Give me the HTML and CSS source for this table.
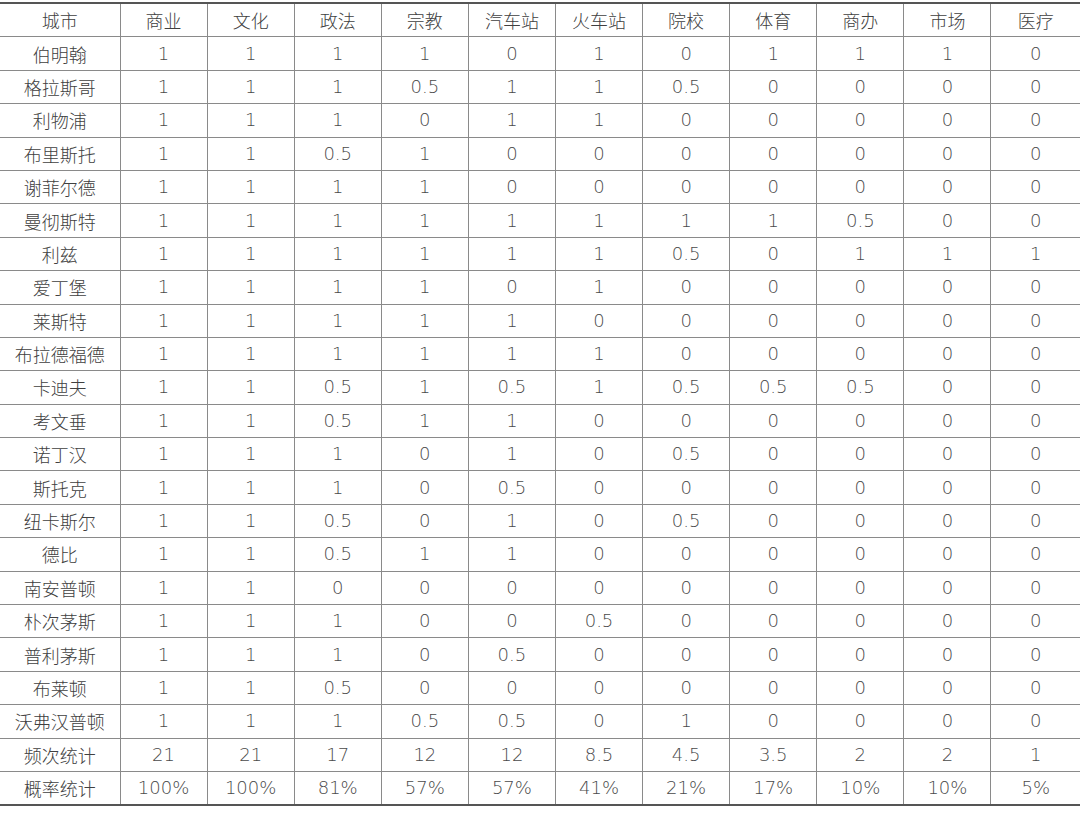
FILE: index.html
```html
<!DOCTYPE html>
<html lang="zh">
<head>
<meta charset="utf-8">
<title>城市统计</title>
<link rel="stylesheet" href="styles.css">
</head>
<body>
<div class="wrap">
<table class="grid">
<thead>
<tr><th>城市</th><th>商业</th><th>文化</th><th>政法</th><th>宗教</th><th>汽车站</th><th>火车站</th><th>院校</th><th>体育</th><th>商办</th><th>市场</th><th>医疗</th></tr>
</thead>
<tbody>
<tr><td>伯明翰</td><td>1</td><td>1</td><td>1</td><td>1</td><td>0</td><td>1</td><td>0</td><td>1</td><td>1</td><td>1</td><td>0</td></tr>
<tr><td>格拉斯哥</td><td>1</td><td>1</td><td>1</td><td>0.5</td><td>1</td><td>1</td><td>0.5</td><td>0</td><td>0</td><td>0</td><td>0</td></tr>
<tr><td>利物浦</td><td>1</td><td>1</td><td>1</td><td>0</td><td>1</td><td>1</td><td>0</td><td>0</td><td>0</td><td>0</td><td>0</td></tr>
<tr><td>布里斯托</td><td>1</td><td>1</td><td>0.5</td><td>1</td><td>0</td><td>0</td><td>0</td><td>0</td><td>0</td><td>0</td><td>0</td></tr>
<tr><td>谢菲尔德</td><td>1</td><td>1</td><td>1</td><td>1</td><td>0</td><td>0</td><td>0</td><td>0</td><td>0</td><td>0</td><td>0</td></tr>
<tr><td>曼彻斯特</td><td>1</td><td>1</td><td>1</td><td>1</td><td>1</td><td>1</td><td>1</td><td>1</td><td>0.5</td><td>0</td><td>0</td></tr>
<tr><td>利兹</td><td>1</td><td>1</td><td>1</td><td>1</td><td>1</td><td>1</td><td>0.5</td><td>0</td><td>1</td><td>1</td><td>1</td></tr>
<tr><td>爱丁堡</td><td>1</td><td>1</td><td>1</td><td>1</td><td>0</td><td>1</td><td>0</td><td>0</td><td>0</td><td>0</td><td>0</td></tr>
<tr><td>莱斯特</td><td>1</td><td>1</td><td>1</td><td>1</td><td>1</td><td>0</td><td>0</td><td>0</td><td>0</td><td>0</td><td>0</td></tr>
<tr><td>布拉德福德</td><td>1</td><td>1</td><td>1</td><td>1</td><td>1</td><td>1</td><td>0</td><td>0</td><td>0</td><td>0</td><td>0</td></tr>
<tr><td>卡迪夫</td><td>1</td><td>1</td><td>0.5</td><td>1</td><td>0.5</td><td>1</td><td>0.5</td><td>0.5</td><td>0.5</td><td>0</td><td>0</td></tr>
<tr><td>考文垂</td><td>1</td><td>1</td><td>0.5</td><td>1</td><td>1</td><td>0</td><td>0</td><td>0</td><td>0</td><td>0</td><td>0</td></tr>
<tr><td>诺丁汉</td><td>1</td><td>1</td><td>1</td><td>0</td><td>1</td><td>0</td><td>0.5</td><td>0</td><td>0</td><td>0</td><td>0</td></tr>
<tr><td>斯托克</td><td>1</td><td>1</td><td>1</td><td>0</td><td>0.5</td><td>0</td><td>0</td><td>0</td><td>0</td><td>0</td><td>0</td></tr>
<tr><td>纽卡斯尔</td><td>1</td><td>1</td><td>0.5</td><td>0</td><td>1</td><td>0</td><td>0.5</td><td>0</td><td>0</td><td>0</td><td>0</td></tr>
<tr><td>德比</td><td>1</td><td>1</td><td>0.5</td><td>1</td><td>1</td><td>0</td><td>0</td><td>0</td><td>0</td><td>0</td><td>0</td></tr>
<tr><td>南安普顿</td><td>1</td><td>1</td><td>0</td><td>0</td><td>0</td><td>0</td><td>0</td><td>0</td><td>0</td><td>0</td><td>0</td></tr>
<tr><td>朴次茅斯</td><td>1</td><td>1</td><td>1</td><td>0</td><td>0</td><td>0.5</td><td>0</td><td>0</td><td>0</td><td>0</td><td>0</td></tr>
<tr><td>普利茅斯</td><td>1</td><td>1</td><td>1</td><td>0</td><td>0.5</td><td>0</td><td>0</td><td>0</td><td>0</td><td>0</td><td>0</td></tr>
<tr><td>布莱顿</td><td>1</td><td>1</td><td>0.5</td><td>0</td><td>0</td><td>0</td><td>0</td><td>0</td><td>0</td><td>0</td><td>0</td></tr>
<tr><td>沃弗汉普顿</td><td>1</td><td>1</td><td>1</td><td>0.5</td><td>0.5</td><td>0</td><td>1</td><td>0</td><td>0</td><td>0</td><td>0</td></tr>
<tr><td>频次统计</td><td>21</td><td>21</td><td>17</td><td>12</td><td>12</td><td>8.5</td><td>4.5</td><td>3.5</td><td>2</td><td>2</td><td>1</td></tr>
<tr><td>概率统计</td><td>100%</td><td>100%</td><td>81%</td><td>57%</td><td>57%</td><td>41%</td><td>21%</td><td>17%</td><td>10%</td><td>10%</td><td>5%</td></tr>
</tbody>
</table>
</div>
</body>
</html>
```
FILE: styles.css
```css
html, body {
  margin: 0;
  padding: 0;
  background: #ffffff;
}
.wrap {
  padding-top: 2px;
  width: 1080px;
  overflow: hidden;
}
.grid {
  border-collapse: collapse;
  table-layout: fixed;
  width: 1080px;
  font-family: "Noto Sans CJK SC", "Noto Sans", sans-serif;
  font-weight: 300;
  font-size: 18px;
  color: #404040;
  border-top: 2px solid #555555;
  border-bottom: 2px solid #555555;
}
.grid th, .grid td {
  font-weight: 300;
  text-align: center;
  vertical-align: middle;
  padding: 0;
  height: 32.4px;
  line-height: 20px;
  border: 1px solid #8a8a8a;
  width: 86.1px;
}
.grid td:not(:first-child) {
  font-family: "DejaVu Sans", sans-serif;
  font-weight: 200;
  font-size: 18px;
  color: #4a4a4a;
}
.grid th:first-child, .grid td:first-child {
  width: 119.5px;
  border-left: none;
}
.grid th:last-child, .grid td:last-child {
  width: auto;
  border-right: none;
}
```
